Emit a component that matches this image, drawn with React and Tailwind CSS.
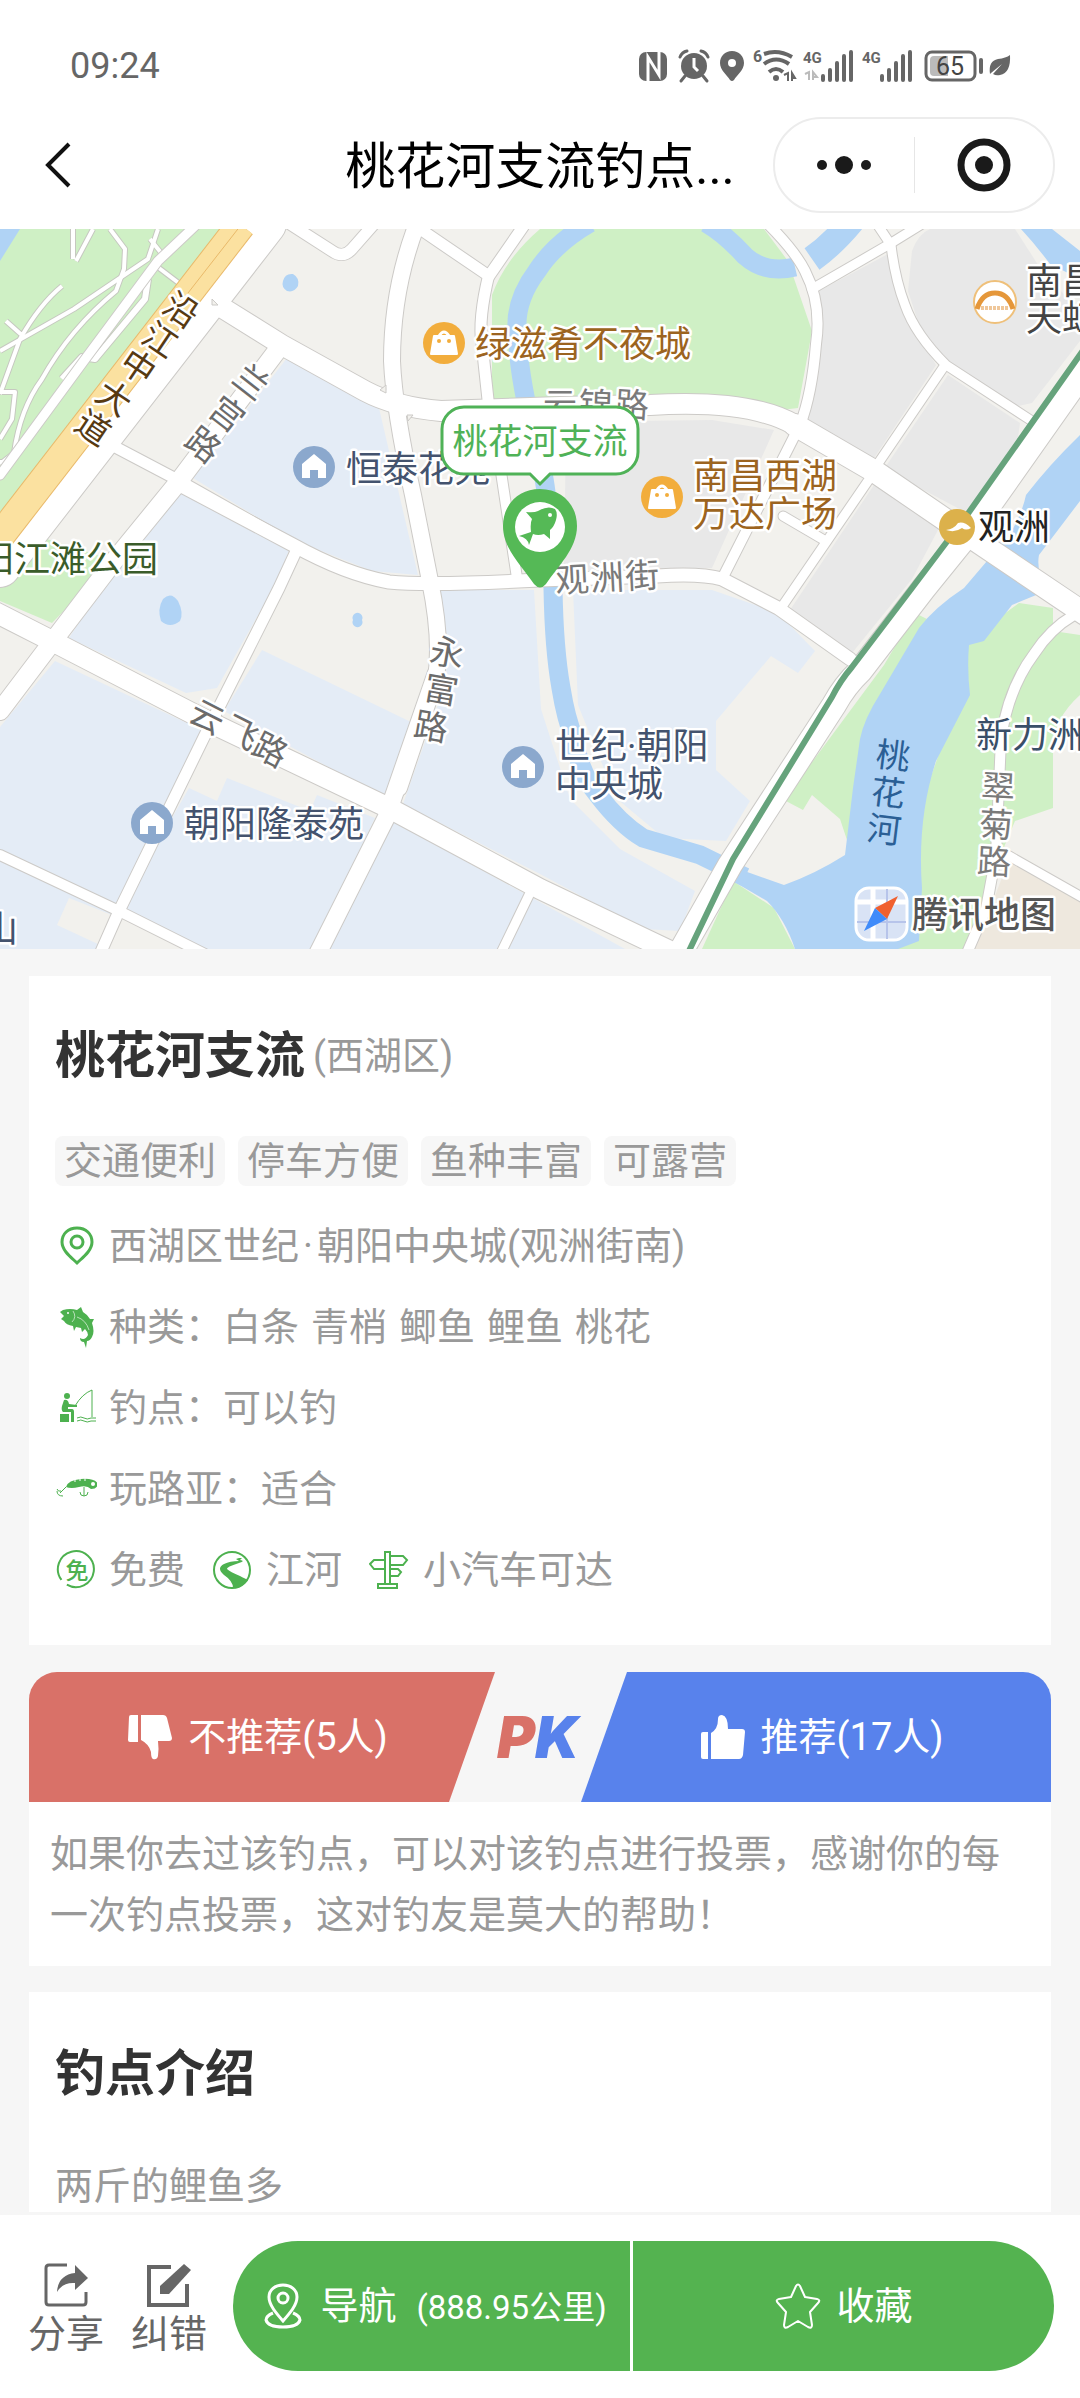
// src/pages/SpotDetail.jsx
import React from 'react';

const tags = ['交通便利', '停车方便', '鱼种丰富', '可露营'];
const fishes = ['白条', '青梢', '鲫鱼', '鲤鱼', '桃花'];

// 地图底色块
const areas = [
  { fill: '#cff0c5', d: 'M0 0H220L53 217L0 287Z' },
  { fill: '#cff0c5', d: 'M0 326L34 306L110 330L86 359L52 394L0 372Z' },
  { fill: '#cff0c5', d: 'M540 0H764L788 32L812 102L798 179L781 181L712 166L647 169L492 176V66Q505 30 540 0Z' },
  { fill: '#e8e8e8', d: 'M815 64L888 25L902 82L936 136L874 229L805 189Z' },
  { fill: '#e8e8e8', d: 'M912 22Q918 5 930 0H1015L1042 42L1080 82V112L1032 174L1014 178L950 138L922 105L908 62Z' },
  { fill: '#e8e8e8', d: 'M948 146L1020 194L1018 208L967 284L884 240Z' },
  { fill: '#e8e8e8', d: 'M874 256L939 299L912 350L852 424L788 384Z' },
  { fill: '#e8e8e8', d: 'M566 200L636 192L712 191L774 201L712 339L564 342Z' },
  { fill: '#e4ecf6', d: 'M287 129L379 179L418 346L372 342L296 312L193 249Z' },
  { fill: '#e4ecf6', d: 'M182 262L290 318L279 349L217 459L186 464L69 409L110 345Z' },
  { fill: '#e4ecf6', d: 'M55 432L206 503L119 682L0 626V498Z' },
  { fill: '#e4ecf6', d: 'M262 421L413 494L386 569L224 482Z' },
  { fill: '#e4ecf6', d: 'M189 559L217 572L227 549L310 582L317 566L375 589L313 720H200L119 682Z' },
  { fill: '#e4ecf6', d: 'M0 626L119 682L103 720H0Z' },
  { fill: '#f2f1ed', d: 'M69 669L57 696L100 716L112 686Z' },
  { fill: '#e4ecf6', d: 'M389 590L625 720H320Z' },
  { fill: '#e4ecf6', d: 'M441 361H534L541 480L570 570L620 620L695 662L680 702L643 700L540 645L403 575L440 470Z' },
  { fill: '#e4ecf6', d: 'M573 361H712L778 384L815 422L798 444L771 427L716 492V541L750 572L726 612L664 609L616 569L578 476Z' },
  { fill: '#cff0c5', d: 'M915 384L929 391L880 480L862 560L850 620L840 590L812 566L803 581L784 571L884 436Z' },
  { fill: '#cff0c5', d: 'M733 652L774 679L795 720H702Z' },
  { fill: '#cff0c5', d: 'M967 412L1019 374L1053 379V402L1080 406V466Q1053 490 1053 520V579L1015 592L991 649L970 720H890L915 592L960 466Z' },
  { fill: '#eee8de', d: 'M1012 622L1080 668V720H975Z' },
  {
    fill: '#b0d3f5',
    d: 'M1080 206Q1050 235 1026 266Q1022 285 1010 305L964 359Q935 378 919 399L880 465Q864 490 860 510L853 559L845 626Q815 645 784 656L736 639L731 651L767 672Q785 690 795 720H898L919 712L922 659Q917 590 936 532L970 466Q967 440 969 416L984 412L1012 376L1046 362Q1036 340 1039 326L1080 272Z',
  },
  { fill: '#b0d3f5', d: 'M1021 0H1052L1080 22V50L1050 35Q1035 15 1021 0Z' },
  { fill: '#b0d3f5', d: 'M0 0H20L0 32Z' },
  { fill: '#b0d3f5', d: 'M283 52q2-8 10-7q7 4 5 12q-4 7-11 5q-6-4-4-10Z' },
  { fill: '#b0d3f5', d: 'M163 370q8-8 15 2q6 12 2 20q-10 8-19 0q-4-12 2-22Z' },
  { fill: '#b0d3f5', d: 'M353 391a5 5 0 1 0 9 0a5 5 0 1 0-9 0Z' },
];

const streams = [
  { w: 19, d: 'M590 -6Q555 14 537 42Q512 75 518 110Q518 140 532 200Q550 250 553 359Q554 420 561 459Q566 490 574 509Q580 545 598 566Q620 595 643 609Q670 617 700 626L745 648' },
  { w: 19, d: 'M706 -6Q725 5 745 27Q765 45 795 38' },
  { w: 26, d: 'M812 30Q832 16 852 -8' },
];

// 公园步道
const paths = [
  { w: 4, d: 'M158 0L148 30L74 80L0 122' },
  { w: 4, d: 'M73 30V0M93 0L76 32M110 0L125 20L124 40L116 62Q70 100 42 150Q20 180 14 224L0 235' },
  { w: 4, d: 'M6 92L24 108M62 57Q40 75 20 110L0 165M0 163H15L12 190L0 210M150 10L162 25M155 36L180 55M0 233H6' },
  { w: 6, d: 'M148 50L145 70L95 130L82 128L62 150' },
];

const roads = [
  { w: 9, d: 'M195 -3L158 32L86 129L0 246' },
  { w: 40, d: 'M266 -5L0 338' },
  { w: 18, d: 'M279 119L176 256L114 332L53 412L0 482' },
  { w: 11, d: 'M290 -5L332 22Q343 30 352 20L374 -5' },
  { w: 11, d: 'M420 0L489 47L527 -8' },
  { w: 11, d: 'M489 45Q478 90 482 115L489 180' },
  { w: 10, d: 'M493 190L517 349' },
  { w: 11, d: 'M100 210L176 250L293 316' },
  { w: 13, d: 'M176 254L293 316Q345 345 389 353Q430 357 540 351L657 347Q700 344 722 350L778 379L850 430' },
  { w: 11, d: 'M298 318L279 359L207 502L119 682L100 725' },
  { w: 10, d: 'M0 626L119 682L205 725' },
  { w: 9, d: 'M530 664L500 726' },
  { w: 16, d: 'M417 -5Q392 60 392 132Q394 180 413 266L430 352Q442 410 436 449L399 559' },
  { w: 17, d: 'M436 445L386 589L318 724' },
  { w: 20, d: 'M-5 383L52 412L207 492L389 579L540 660L670 722' },
  { w: 10, d: 'M768 -5Q795 22 805 42Q822 75 816 115Q812 165 800 196L722 350' },
  { w: 9, d: 'M812 60L888 16L922 -5' },
  { w: 9, d: 'M877 -5L891 16Q895 50 905 76Q915 105 946 136L1032 192' },
  { w: 9, d: 'M943 139L877 236' },
  { w: 9, d: 'M870 249L781 379' },
  { w: 9, d: 'M783 287L824 311' },
  { w: 20, d: 'M205 68L282 116L365 162Q395 178 441 182L560 178L650 176Q750 170 795 196L874 242' },
  { w: 22, d: 'M795 196L874 242L953 296L1085 385' },
  { w: 24, d: 'M1095 126L975 296L924 359L860 442Q845 456 834 476L730 636L680 724' },
  { w: 10, d: 'M1074 386Q1050 400 1034 425Q1008 460 1001 510L996 626L986 680L967 724' },
  { w: 9, d: 'M1004 624L1085 670' },
];

// 沿路旋转的字
const roadChars = [
  { c: '沿', x: 181, y: 79, r: 34, f: '#573a12' },
  { c: '江', x: 160, y: 109, r: 34, f: '#573a12' },
  { c: '中', x: 138, y: 136, r: 34, f: '#573a12' },
  { c: '大', x: 114, y: 167, r: 34, f: '#573a12' },
  { c: '道', x: 93, y: 197, r: 34, f: '#573a12' },
  { c: '兰', x: 251, y: 151, r: 38, f: '#6b6b6b' },
  { c: '宫', x: 227, y: 183, r: 38, f: '#6b6b6b' },
  { c: '路', x: 203, y: 214, r: 38, f: '#6b6b6b' },
  { c: '永', x: 447, y: 422, r: 10, f: '#6b6b6b' },
  { c: '富', x: 441, y: 459, r: 10, f: '#6b6b6b' },
  { c: '路', x: 431, y: 496, r: 10, f: '#6b6b6b' },
  { c: '云', x: 207, y: 486, r: 27, f: '#6b6b6b' },
  { c: '飞', x: 241, y: 502, r: 27, f: '#6b6b6b' },
  { c: '路', x: 270, y: 519, r: 27, f: '#6b6b6b' },
  { c: '云', x: 560, y: 174, r: 0, f: '#7a7a7a' },
  { c: '锦', x: 596, y: 174, r: 2, f: '#7a7a7a' },
  { c: '路', x: 632, y: 174, r: 4, f: '#7a7a7a' },
  { c: '观', x: 572, y: 349, r: -3, f: '#7a7a7a' },
  { c: '洲', x: 607, y: 347, r: -3, f: '#7a7a7a' },
  { c: '街', x: 642, y: 345, r: -3, f: '#7a7a7a' },
  { c: '翠', x: 998, y: 557, r: 3, f: '#7a7a7a' },
  { c: '菊', x: 996, y: 594, r: 3, f: '#7a7a7a' },
  { c: '路', x: 994, y: 631, r: 3, f: '#7a7a7a' },
];

const riverChars = [
  { c: '桃', x: 893, y: 527 },
  { c: '花', x: 888, y: 564 },
  { c: '河', x: 884, y: 601 },
];

const labels = [
  { t: '绿滋肴不夜城', x: 475, y: 114, f: '#9c6420' },
  { t: '恒泰花苑', x: 346, y: 239, f: '#44536e' },
  { t: '朝阳江滩公园', x: 158, y: 329, f: '#3a5c2a', end: true },
  { t: '朝阳隆泰苑', x: 184, y: 594, f: '#44536e' },
  { t: '世纪·朝阳', x: 555, y: 516, f: '#44536e' },
  { t: '中央城', x: 555, y: 554, f: '#44536e' },
  { t: '南昌西湖', x: 693, y: 246, f: '#9c6420' },
  { t: '万达广场', x: 693, y: 284, f: '#9c6420' },
  { t: '观洲', x: 978, y: 297, f: '#222222' },
  { t: '南昌', x: 1026, y: 51, f: '#444444' },
  { t: '天虹', x: 1026, y: 88, f: '#444444' },
  { t: '新力洲', x: 976, y: 505, f: '#3a4f68' },
  { t: '山', x: 18, y: 699, f: '#44536e', end: true },
];

const HomePoi = ({ x, y }) => (
  <g transform={`translate(${x} ${y})`}>
    <circle r="21" fill="#8ba8cd" />
    <path d="M-12 -3L0 -13L12 -3V11H4V3H-4V11H-12Z" fill="#fff" />
  </g>
);

const ShopPoi = ({ x, y }) => (
  <g transform={`translate(${x} ${y})`}>
    <circle r="21" fill="#f2ad3c" />
    <path d="M-10 -7H10L13 11H-13Z" fill="#fff" stroke="#fff" strokeWidth="2" strokeLinejoin="round" />
    <path d="M-5 -7Q0 -15 5 -7" fill="none" stroke="#fff" strokeWidth="3" />
    <circle cx="-5" cy="-2" r="2" fill="#f2ad3c" />
    <circle cx="5" cy="-2" r="2" fill="#f2ad3c" />
  </g>
);

const SpotMap = () => (
  <svg className="block h-[720px] w-full" viewBox="0 0 1080 720" preserveAspectRatio="xMidYMid slice" role="img" aria-label="钓点地图">
    <rect width="1080" height="720" fill="#f2f1ed" />
    {areas.map((a, i) => <path key={i} d={a.d} fill={a.fill} />)}
    {streams.map((s, i) => <path key={i} d={s.d} fill="none" stroke="#b0d3f5" strokeWidth={s.w} />)}

    <g fill="none" strokeLinejoin="round">
      {paths.map((p, i) => <path key={i} d={p.d} stroke="#c6c8c0" strokeWidth={p.w + 2} />)}
      {paths.map((p, i) => <path key={i} d={p.d} stroke="#fff" strokeWidth={p.w} />)}
      <g strokeLinecap="round">
        {roads.map((p, i) => <path key={i} d={p.d} stroke="#cccac7" strokeWidth={p.w + 2} />)}
        {roads.map((p, i) => <path key={i} d={p.d} stroke="#fff" strokeWidth={p.w} />)}
      </g>
      <path d="M241 -4L-3 311" stroke="#e9b96a" strokeWidth="30" />
      <path d="M241 -4L-3 311" stroke="#fbe1a0" strokeWidth="28" />
      <path d="M241 -4L188 64" stroke="#e9b96a" strokeWidth="1" />
      <path d="M1084 120L967 286L912 359L852 438Q840 452 832 468L733 630L688 724" stroke="#66a37c" strokeWidth="6" />
    </g>
    <g fill="#f2f1ed" stroke="#cccac7">
      <path d="M212 70l6 6h-6Z" />
      <path d="M380 161l6-5v8Z" />
      <path d="M407 186h6l-5 6Z" />
    </g>

    <g transform="translate(0 2)" fontSize="36" style={{ paintOrder: 'stroke' }} stroke="#fff" strokeWidth="5" strokeLinejoin="round">
      {roadChars.map((k, i) => (
        <text key={i} transform={`translate(${k.x} ${k.y}) rotate(${k.r})`} textAnchor="middle" dominantBaseline="central" fontSize="34" fill={k.f}>
          {k.c}
        </text>
      ))}
      {labels.map((l) => (
        <text key={l.t} x={l.x} y={l.y} textAnchor={l.end ? 'end' : 'start'} dominantBaseline="central" fill={l.f}>
          {l.t}
        </text>
      ))}
      <text x="912" y="685" dominantBaseline="central" fontWeight="500" fill="#555">腾讯地图</text>
    </g>
    {riverChars.map((k) => (
      <text key={k.c} transform={`translate(${k.x} ${k.y}) rotate(7)`} textAnchor="middle" dominantBaseline="central" fontSize="34" fill="#2b5f95">
        {k.c}
      </text>
    ))}

    <ShopPoi x={444} y={114} />
    <ShopPoi x={662} y={268} />
    <HomePoi x={314} y={238} />
    <HomePoi x={152} y={594} />
    <HomePoi x={523} y={538} />
    <circle cx="957" cy="298" r="18" fill="#dcb14b" />
    <path d="M946 301Q954 300 958 294Q964 292 971 299Q966 302 962 299Q955 304 946 301Z" fill="#fff" />
    <circle cx="995" cy="73" r="21" fill="#fff" stroke="#efc07a" strokeWidth="2" />
    <path d="M977 80Q982 64 995 64Q1008 64 1013 80" fill="none" stroke="#e5973a" strokeWidth="5" />
    <path d="M981 79H1009" stroke="#efc79a" strokeWidth="4" strokeDasharray="3 1" />

    {/* 腾讯地图标志 */}
    <rect x="856" y="659" width="51" height="52" rx="13" fill="#d9e3f5" stroke="#fff" strokeWidth="3" />
    <path d="M873 660V710M857 673H906" stroke="#fff" strokeWidth="5" />
    <path d="M887 660V710M857 693H906" stroke="#b7c4ea" strokeWidth="2" />
    <path d="M898 667L875 679L887 690Z" fill="#f0602f" />
    <path d="M864 702L875 679L887 690Z" fill="#3f8bfa" />

    {/* 当前钓点 */}
    <path
      d="M464 178H616A22 22 0 0 1 638 200V223A22 22 0 0 1 616 245H550L540 255L530 245H464A22 22 0 0 1 442 223V200A22 22 0 0 1 464 178Z"
      fill="#fff"
      stroke="#4fb257"
      strokeWidth="3"
    />
    <text x="540" y="213" textAnchor="middle" dominantBaseline="central" fontSize="35" fill="#4fb257">桃花河支流</text>
    <path d="M540 260C518 260 503 276 503 297C503 320 522 337 534 355Q540 362 546 355C558 337 577 320 577 297C577 276 562 260 540 260Z" fill="#55b956" />
    <circle cx="540" cy="298" r="25" fill="#fff" />
    <path d="M526 283Q534 284 538 282Q548 276 555 280Q558 284 556 291Q554 298 550 301V310L544 305Q538 307 533 305L529 316Q528 309 519 307L531 303Q530 294 532 290Z" fill="#55b956" />
    <circle cx="550" cy="286" r="2" fill="#fff" />
  </svg>
);

const SignalBars = ({ x }) => (
  <path
    d={`M${x} 32V28M${x + 7} 32V22M${x + 14} 32V15M${x + 21} 32V8M${x + 28} 32V4`}
    stroke="#666"
    strokeWidth="4"
    strokeLinecap="round"
  />
);

const StatusIcons = () => (
  <svg width="380" height="36" viewBox="0 0 380 36" fill="#666" className="font-[Roboto]" aria-hidden="true">
    <rect x="3" y="4" width="28" height="29" rx="7" />
    <path d="M12 33V9L23 27V4" fill="none" stroke="#fff" strokeWidth="3" />
    <circle cx="58" cy="18" r="13" />
    <path d="M44 9Q46 4 51 3M72 9Q70 4 65 3M49 28l-4 5M67 28l4 5" fill="none" stroke="#666" strokeWidth="3" strokeLinecap="round" />
    <path d="M58 10V19L62 23" fill="none" stroke="#fff" strokeWidth="3" />
    <path fillRule="evenodd" d="M96 3C89 3 84 8 84 15C84 22 91 27 94 32Q96 34 98 32C101 27 108 22 108 15C108 8 103 3 96 3ZM96 11A4 4 0 1 1 96 19A4 4 0 1 1 96 11Z" />
    <text x="117" y="14" fontSize="16" fontWeight="700">6</text>
    <path d="M128 6Q142 1 156 9M128 16Q140 7 153 16M133 24Q140 18 147 24" fill="none" stroke="#666" strokeWidth="4" />
    <circle cx="140" cy="30" r="3" />
    <path d="M148 27l4-2v8M156 33v-8l3 5h-3" fill="none" stroke="#666" strokeWidth="2" />
    <text x="167" y="15" fontSize="15" fontWeight="700">4G</text>
    <path d="M169 26l4-2v8M177 32v-8l4 5h-4" fill="none" stroke="#bbb" strokeWidth="2" />
    <SignalBars x={187} />
    <text x="226" y="15" fontSize="15" fontWeight="700">4G</text>
    <SignalBars x={246} />
    <rect x="290" y="4" width="49" height="28" rx="6" fill="none" stroke="#666" strokeWidth="3" />
    <path d="M294 12a4 4 0 0 1 4-4h14v20h-14a4 4 0 0 1-4-4Z" fill="#bbb" />
    <text x="314" y="27" fontSize="25" textAnchor="middle" fill="#444">65</text>
    <rect x="343" y="10" width="4" height="16" rx="2" />
    <path d="M354 26Q352 13 362 11Q370 10 374 7Q375 25 364 27Q360 28 357 26L366 16L355 25Z" />
  </svg>
);

const Header = () => (
  <header className="bg-white">
    <div className="flex h-[100px] items-center justify-between pt-8 pr-16 pl-[70px]">
      <span className="font-[Roboto] text-[36px] leading-none text-[#666]">09:24</span>
      <StatusIcons />
    </div>
    <nav className="grid h-[129px] grid-cols-[1fr_auto_1fr] items-center">
      <button type="button" aria-label="返回" className="w-fit pl-11">
        <svg width="28" height="48" viewBox="0 0 28 48" fill="none" stroke="#111" strokeWidth="4">
          <path d="M25 3L4 24L25 45" />
        </svg>
      </button>
      <h1 className="pt-1 text-[50px] leading-[64px] text-black">桃花河支流钓点...</h1>
      <div className="mr-[25px] flex h-24 w-[282px] items-center justify-self-end rounded-full border-2 border-[#ececec]">
        <button type="button" aria-label="更多" className="flex flex-1 justify-center">
          <svg width="60" height="20" viewBox="0 0 60 20" fill="#1a1a1a">
            <circle cx="8" cy="10" r="5" />
            <circle cx="30" cy="10" r="9" />
            <circle cx="52" cy="10" r="5" />
          </svg>
        </button>
        <span className="h-14 w-px bg-[#e6e6e6]" />
        <button type="button" aria-label="关闭" className="flex flex-1 justify-center">
          <svg width="54" height="54" viewBox="0 0 54 54">
            <circle cx="27" cy="27" r="23" fill="none" stroke="#1a1a1a" strokeWidth="7" />
            <circle cx="27" cy="27" r="9" fill="#1a1a1a" />
          </svg>
        </button>
      </div>
    </nav>
  </header>
);

const Icon = ({ children }) => (
  <svg width="42" height="42" viewBox="0 0 42 42" fill="#4db14f" className="shrink-0" aria-hidden="true">
    {children}
  </svg>
);

const Info = ({ icon, children }) => (
  <div className="flex items-center gap-3">
    <Icon>{icon}</Icon>
    <span>{children}</span>
  </div>
);

const pinIcon = (
  <g fill="none" stroke="#4db14f" strokeWidth="3">
    <path d="M22 2C13 2 7 8 7 16C7 25 17 32 22 37C27 32 37 25 37 16C37 8 31 2 22 2Z" />
    <circle cx="22" cy="16" r="6" />
  </g>
);

const fishIcon = (
  <>
    <path d="M5 5L8 3Q15 1 22 3L26 0L28 5Q33 8 35 12L39 12L37 16Q40 25 37 30Q35 34 32 34L31 41L29 35Q25 35 25 31Q30 34 33 28Q33 25 30 22L27 25L26 21L21 20L19 24L18 19Q11 18 9 14L6 12L9 9Z" />
    <circle cx="13" cy="6" r="1" fill="#fff" />
    <path d="M18 4Q22 10 17 15M22 10Q31 13 34 23" fill="none" stroke="#fff" strokeWidth="1" opacity="0.6" />
  </>
);

const anglerIcon = (
  <>
    <circle cx="12" cy="8" r="3" />
    <path d="M9 12Q13 11 14 16L22 17V19H13V21H17Q19 21 19 24V34H16V24H8Q6 22 7 18Z" />
    <rect x="5" y="26" width="9" height="8" />
    <path d="M20 18Q27 6 37 2V29M22 30q4-2 7 0t7 0h5M22 33q4-2 7 0t7 0h5" fill="none" stroke="#4db14f" strokeWidth="1" />
  </>
);

const lureIcon = (
  <>
    <path d="M11 18Q13 11 26 10Q40 9 43 15Q42 20 36 20Q32 16 24 18Q16 20 11 18Z" />
    <circle cx="38" cy="15" r="2" fill="#fff" />
    <path d="M20 9v4M25 8v4M30 8v4" stroke="#fff" strokeWidth="1" />
    <path d="M11 18L5 24M2 20Q3 23 6 22M2 22Q2 27 8 27M29 18V27M25 23Q25 27 29 27Q33 27 33 23" fill="none" stroke="#4db14f" strokeWidth="1" />
  </>
);

const freeIcon = (
  <>
    <path d="M8 32A18 18 0 1 1 14 36" transform="rotate(8 22 20)" fill="none" stroke="#4db14f" strokeWidth="2" />
    <text x="22" y="29" fontSize="23" fontWeight="500" textAnchor="middle">免</text>
  </>
);

const riverIcon = (
  <>
    <circle cx="20" cy="20" r="18" fill="none" stroke="#4db14f" strokeWidth="2" />
    <path d="M27 8H30L28 10Q34 11 27 13Q14 17 15 19Q18 22 28 26Q34 29 36 30Q30 38 21 38Q21 31 12 25Q4 18 12 14Q18 11 27 11L24 9Z" />
  </>
);

const signIcon = (
  <g fill="none" stroke="#4db14f" strokeWidth="2">
    <path d="M16 34V2H21V34M9 34H28V38H9ZM16 10H5L1 14L5 19H16M21 6H34L38 10L34 15H21M21 19H29L32 22L29 26H21" />
  </g>
);

const InfoCard = () => (
  <section className="bg-white px-[26px] pt-[42px] pb-[34px] text-[38px] text-[#999]">
    <div className="flex h-[76px] items-center gap-2">
      <h2 className="text-[50px] font-bold text-[#333]">桃花河支流</h2>
      <span>(西湖区)</span>
    </div>
    <ul className="mt-[42px] flex gap-[13px]">
      {tags.map((tag) => (
        <li key={tag} className="h-[50px] rounded-lg bg-[#f7f7f7] px-[9px] leading-[50px]">{tag}</li>
      ))}
    </ul>
    <div className="mt-5 grid auto-rows-[81px] items-center">
      <Info icon={pinIcon}>西湖区世纪<span className="px-1">·</span>朝阳中央城(观洲街南)</Info>
      <Info icon={fishIcon}>
        <span className="flex gap-3">
          <span>种类：{fishes[0]}</span>
          {fishes.slice(1).map((fish) => <span key={fish}>{fish}</span>)}
        </span>
      </Info>
      <Info icon={anglerIcon}>钓点：可以钓</Info>
      <Info icon={lureIcon}>玩路亚：适合</Info>
      <div className="flex gap-[27px]">
        <Info icon={freeIcon}>免费</Info>
        <Info icon={riverIcon}>江河</Info>
        <Info icon={signIcon}>小汽车可达</Info>
      </div>
    </div>
  </section>
);

const VoteCard = () => (
  <section>
    <div className="flex h-[130px] items-stretch text-[38px] text-white">
      <button
        type="button"
        className="flex flex-1 items-center justify-center gap-4 rounded-tl-[28px] bg-[#d97168] pr-2 [clip-path:polygon(0_0,100%_0,calc(100%-46px)_100%,0_100%)]"
      >
        <svg width="44" height="46" viewBox="0 0 44 46" fill="#fff" aria-hidden="true">
          <path d="M1 3Q1 1 3 1H10V28H2Q0 28 0 26Z" />
          <path d="M13 1H35Q38 1 39 4L44 24Q44 27 41 27H30Q31 35 30 42Q29 46 25 45Q23 44 23 38Q21 30 13 26Z" />
        </svg>
        <span>不推荐(5人)</span>
      </button>
      <div className="flex w-[86px] items-center justify-center font-[Inter] text-[58px] leading-none font-black italic">
        <span className="text-[#d97168]">P</span>
        <span className="text-[#5882ec]">K</span>
      </div>
      <button
        type="button"
        className="flex flex-1 items-center justify-center gap-4 rounded-tr-[28px] bg-[#5882ec] pl-3 [clip-path:polygon(46px_0,100%_0,100%_100%,0_100%)]"
      >
        <svg width="44" height="46" viewBox="0 0 44 46" fill="#fff" aria-hidden="true">
          <path d="M0 20Q0 18 2 18H7V45H2Q0 45 0 43Z" />
          <path d="M10 19Q17 15 17 5Q17 1 21 1Q27 2 27 15H41Q44 15 44 18L42 41Q41 45 38 45H10Z" />
        </svg>
        <span>推荐(17人)</span>
      </button>
    </div>
    <p className="bg-white px-[21px] pt-[22px] pb-5 text-[38px] leading-[61px] text-[#999]">
      如果你去过该钓点，可以对该钓点进行投票，感谢你的每一次钓点投票，这对钓友是莫大的帮助！
    </p>
  </section>
);

const BottomBar = () => (
  <footer className="sticky bottom-0 flex items-center gap-[26px] bg-white pt-[26px] pr-[26px] pb-[27px] pl-7 text-[38px] text-[#666]">
    <div className="flex gap-[27px] pt-2.5 leading-[52px]">
      <button type="button" className="flex flex-col items-center">
        <svg width="46" height="46" viewBox="0 0 46 46" aria-hidden="true">
          <path d="M24 3H6Q3 3 3 6V40Q3 43 6 43H40Q43 43 43 40V30" fill="none" stroke="#666" strokeWidth="3" />
          <path d="M32 3L45 16L32 28V21Q20 20 14 30Q15 13 32 11Z" fill="#666" />
        </svg>
        分享
      </button>
      <button type="button" className="flex flex-col items-center">
        <svg width="46" height="46" viewBox="0 0 46 46" aria-hidden="true">
          <path d="M25 5H3V43H41V22" fill="none" stroke="#666" strokeWidth="4" />
          <path d="M38 2L45 8L23 32H14V24Z" fill="#666" />
        </svg>
        纠错
      </button>
    </div>
    <div className="flex h-[130px] flex-1 gap-[3px] overflow-hidden rounded-full text-white">
      <button type="button" className="flex w-[397px] items-center justify-center gap-[18px] bg-[#54b350] pl-2">
        <svg width="38" height="46" viewBox="0 0 38 46" fill="none" stroke="#fff" strokeWidth="3" aria-hidden="true">
          <path d="M19 38C12 30 5 22 5 14C5 7 11 2 19 2S33 7 33 14C33 22 26 30 19 38Z" />
          <circle cx="19" cy="15" r="5" />
          <path d="M9 30Q2 33 2 37Q4 44 19 44T36 37Q36 33 29 30" />
        </svg>
        <span className="flex items-baseline gap-5">
          导航
          <span className="text-[33px]">(888.95公里)</span>
        </span>
      </button>
      <button type="button" className="flex flex-1 items-center justify-center gap-4 bg-[#54b350]">
        <svg width="46" height="46" viewBox="0 0 46 46" fill="none" stroke="#fff" strokeWidth="2" strokeLinejoin="round" aria-hidden="true">
          <path d="M21 3Q23 0 25 3L30 14L42 16Q46 17 43 20L35 29L37 42Q37 46 33 44L23 38L13 44Q9 46 9 42L11 29L3 20Q0 17 4 16L16 14Z" />
        </svg>
        <span>收藏</span>
      </button>
    </div>
  </footer>
);

const App = () => {
  return (
    <div className="min-h-screen bg-[#f6f6f6] font-['Roboto','Noto_Sans_CJK_SC',sans-serif]">
      <Header />
      <SpotMap />
      <main className="px-[29px] pt-[27px] pb-[3px]">
        <InfoCard />
        <div className="mt-[27px]">
          <VoteCard />
        </div>
        <section className="mt-[26px] bg-white px-[26px] pt-11">
          <h2 className="h-[76px] text-[50px] leading-[76px] font-bold text-[#333]">钓点介绍</h2>
          <p className="mt-12 text-[38px] leading-[52px] text-[#999]">两斤的鲤鱼多</p>
        </section>
      </main>
      <BottomBar />
    </div>
  );
};

export default App;
